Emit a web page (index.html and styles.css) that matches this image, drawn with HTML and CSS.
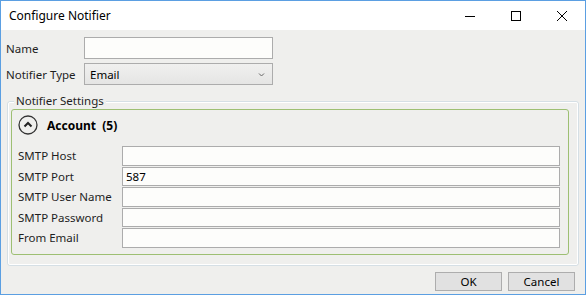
FILE: index.html
```html
<!DOCTYPE html>
<html lang="en">
<head>
    <meta charset="UTF-8">
    <meta name="viewport" content="width=device-width, initial-scale=1.0">
    <title>Configure Notifier</title>
    <link rel="stylesheet" href="styles.css">
</head>
<body>
    <div class="window">
        <div class="titlebar">
            <span class="title">Configure Notifier</span>
            <div class="controls">
                <span class="ctl">
                    <svg width="12" height="12" viewBox="0 0 12 12"><path d="M1 6.5h10" stroke="#000" stroke-width="1"/></svg>
                </span>
                <span class="ctl">
                    <svg width="12" height="12" viewBox="0 0 12 12"><rect x="1.5" y="1.5" width="9" height="9" fill="none" stroke="#000" stroke-width="1"/></svg>
                </span>
                <span class="ctl">
                    <svg width="12" height="12" viewBox="0 0 12 12"><path d="M1 1l10 10M11 1L1 11" stroke="#000" stroke-width="1"/></svg>
                </span>
            </div>
        </div>

        <div class="content">
            <div class="form-top">
                <label>Name</label>
                <input type="text" class="field">
                <label>Notifier Type</label>
                <div class="select">
                    <span>Email</span>
                    <svg width="7" height="5" viewBox="0 0 7 5"><path d="M1 1.5l2.5 2.5 2.5-2.5" fill="none" stroke="#666" stroke-width="1"/></svg>
                </div>
            </div>

            <!-- Notifier Settings group box -->
            <div class="group">
                <span class="group-title">Notifier Settings</span>
                <div class="group-inner">
                    <div class="panel">
                        <div class="panel-header">
                            <svg width="20" height="20" viewBox="0 0 20 20">
                                <circle cx="10" cy="10" r="9" fill="none" stroke="#333" stroke-width="1.3"/>
                                <path d="M6.5 11.5l3.5-3.5 3.5 3.5" fill="none" stroke="#222" stroke-width="2"/>
                            </svg>
                            <span class="panel-title">Account&nbsp; (5)</span>
                        </div>
                        <div class="rows">
                            <label>SMTP Host</label>
                            <input type="text" class="row-field">
                            <label>SMTP Port</label>
                            <input type="text" class="row-field" value="587">
                            <label>SMTP User Name</label>
                            <input type="text" class="row-field">
                            <label>SMTP Password</label>
                            <input type="text" class="row-field">
                            <label>From Email</label>
                            <input type="text" class="row-field">
                        </div>
                    </div>
                </div>
            </div>

            <div class="buttons">
                <button>OK</button>
                <button>Cancel</button>
            </div>
        </div>
    </div>
</body>
</html>
```

FILE: styles.css
```css
body {
    margin: 0;
    padding: 0;
    font-family: "Noto Sans", "Open Sans", sans-serif;
    font-size: 11.5px;
    color: #1e1e1e;
}
.window {
    width: 586px;
    height: 295px;
    box-sizing: border-box;
    border: 1px solid #5b9fe2;
    background-color: #efefed;
    display: flex;
    flex-direction: column;
}
.titlebar {
    height: 29px;
    background-color: #fff;
    display: flex;
    align-items: center;
    justify-content: space-between;
}
.title {
    padding-left: 8px;
    font-size: 12px;
    color: #000;
}
.controls {
    display: flex;
    height: 100%;
}
.ctl {
    width: 46px;
    display: flex;
    align-items: center;
    justify-content: center;
}
.content {
    flex: 1;
    padding: 7px 6px 0 5px;
    display: flex;
    flex-direction: column;
}
.form-top {
    display: grid;
    grid-template-columns: 78px 189px;
    grid-auto-rows: 22px;
    row-gap: 4px;
    align-items: center;
}
.field, .row-field {
    box-sizing: border-box;
    margin: 0;
    border: 1px solid #acacac;
    background-color: #fdfdfb;
    font-family: inherit;
    font-size: 11.5px;
    color: #000;
    outline: none;
}
.field {
    height: 22px;
    width: 189px;
}
.select {
    box-sizing: border-box;
    height: 22px;
    border: 1px solid #acacac;
    background: linear-gradient(#f0f0ef, #e5e5e4);
    display: flex;
    align-items: center;
    justify-content: space-between;
    padding: 0 7px 0 5px;
    color: #000;
}
/* Group box */
.group {
    position: relative;
    margin: 16px 0 0 1px;
    border: 1px solid #d5dfe5;
    border-radius: 3px;
}
.group-title {
    position: absolute;
    top: -9px;
    left: 6px;
    padding: 0 2px;
    background-color: #efefed;
    line-height: 16px;
}
.group-inner {
    border: 1px solid #fff;
    border-radius: 2px;
    padding: 6px 8px 9px 2px;
}
.panel {
    border: 1px solid #9dbf73;
    border-radius: 3px;
    padding: 0 8px 6px 6px;
}
.panel-header {
    height: 30px;
    margin-bottom: 6px;
    display: flex;
    align-items: center;
    gap: 9px;
}
.panel-title {
    font-weight: bold;
    font-size: 12px;
    color: #000;
}
.rows {
    display: grid;
    grid-template-columns: 104px 1fr;
    grid-auto-rows: 19.5px;
    row-gap: 1px;
    align-items: center;
}
.row-field {
    height: 100%;
    padding: 0 3px;
}
.buttons {
    display: flex;
    justify-content: flex-end;
    gap: 6px;
    margin-top: 6px;
    padding-right: 4px;
}
button {
    width: 67px;
    height: 19px;
    border: 1px solid #adadad;
    background-color: #e1e1e1;
    font-family: inherit;
    font-size: 11.5px;
    color: #000;
    padding: 0;
}
```
